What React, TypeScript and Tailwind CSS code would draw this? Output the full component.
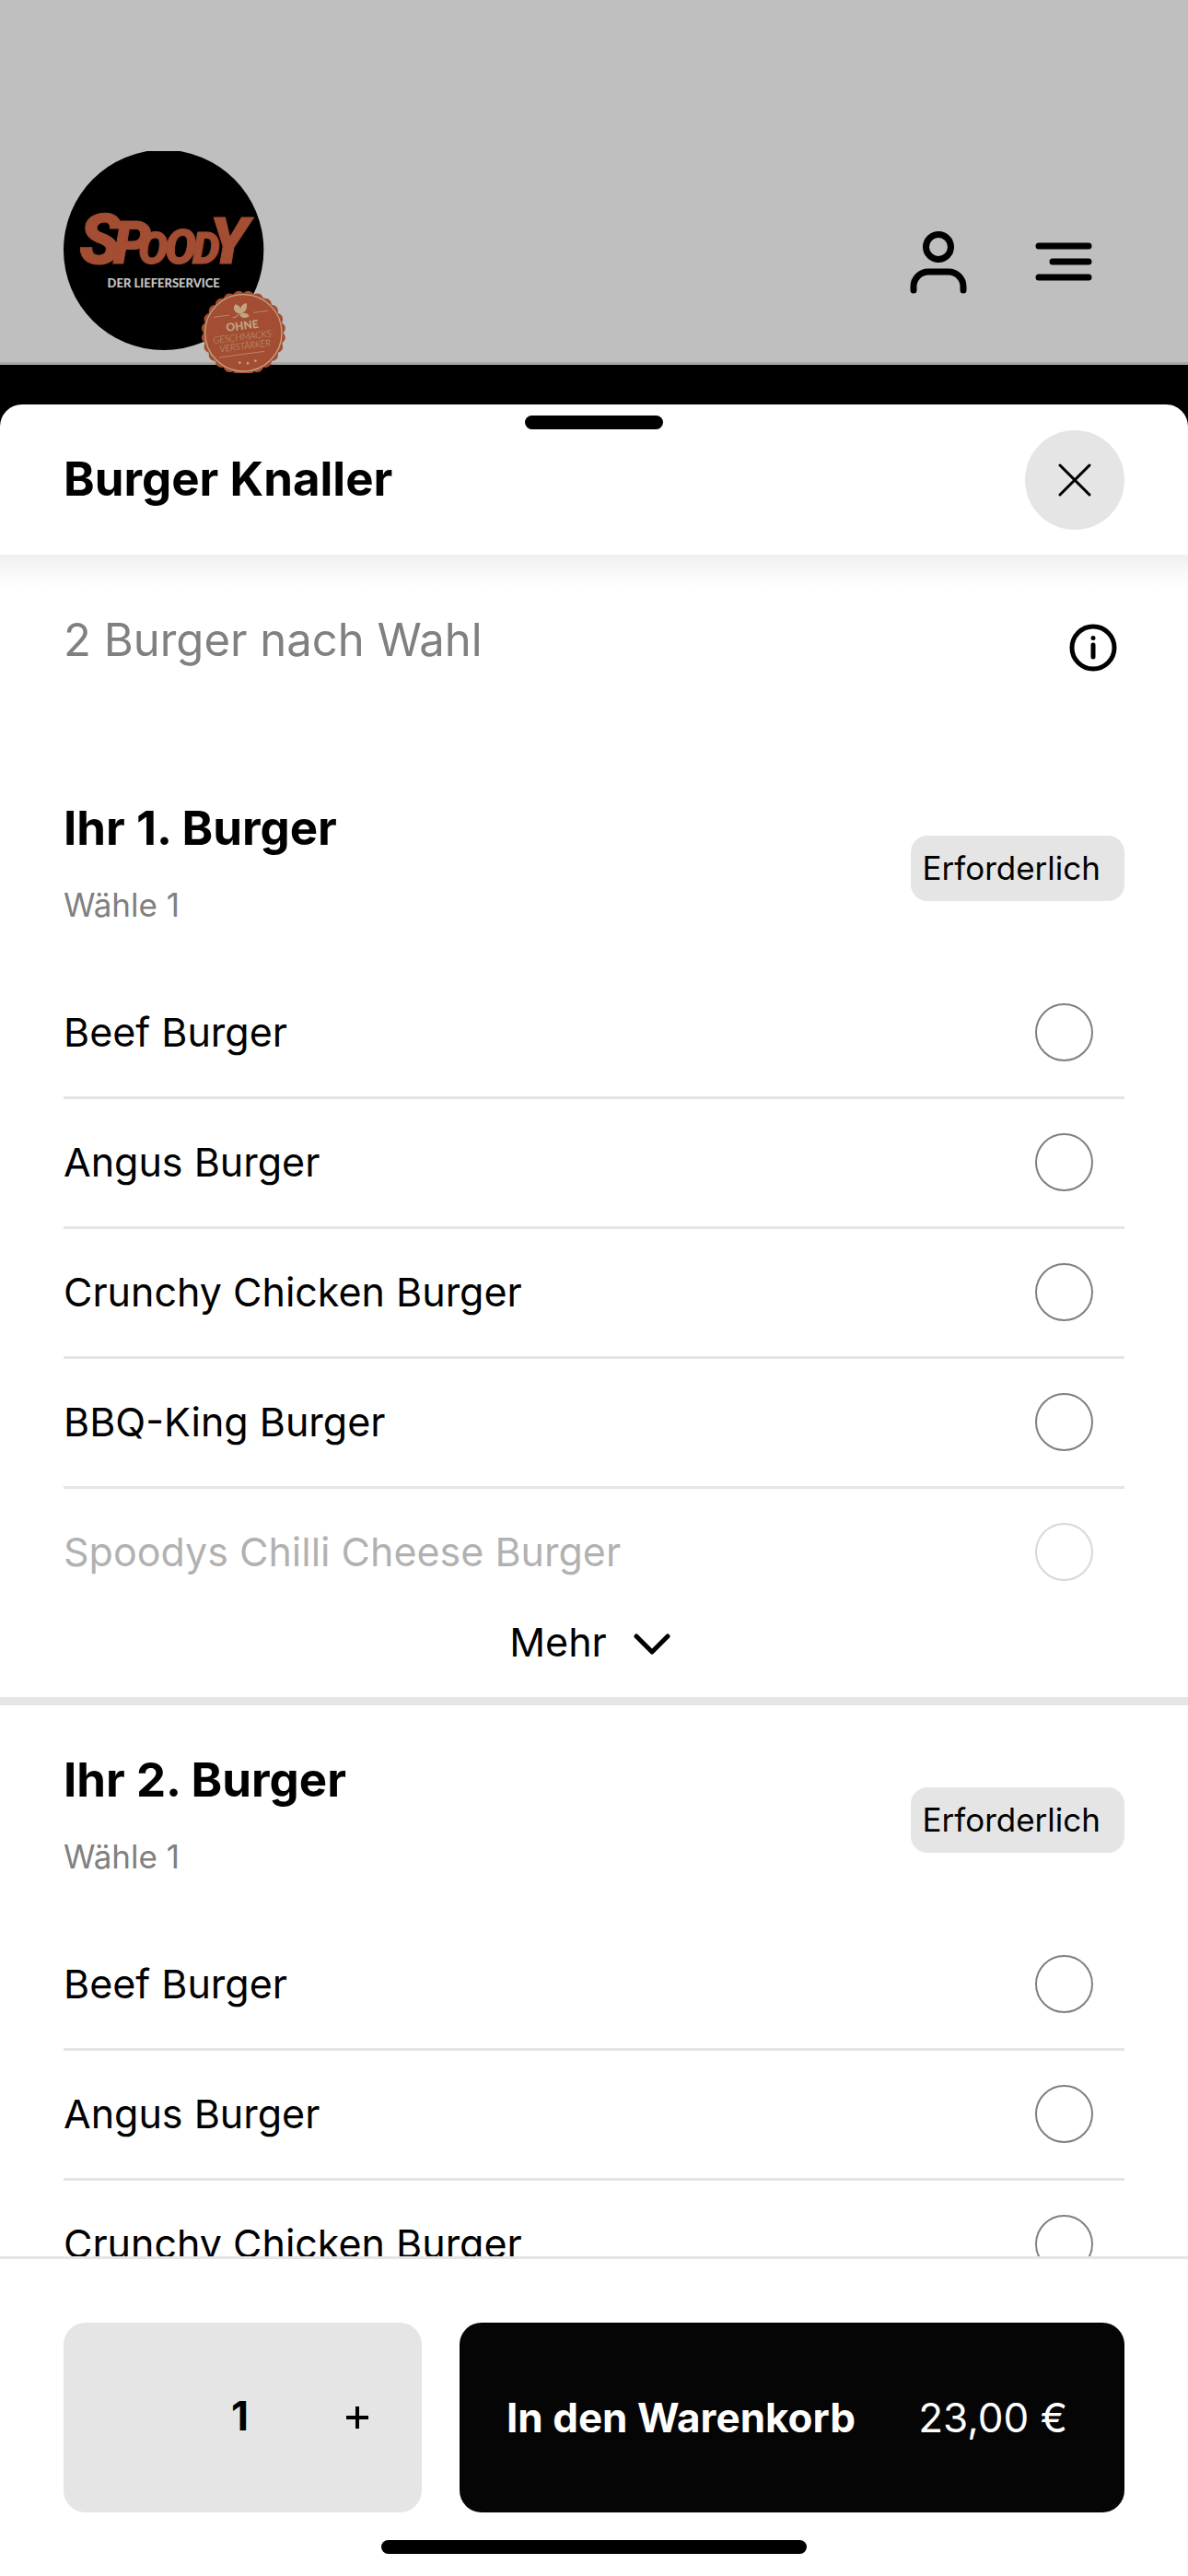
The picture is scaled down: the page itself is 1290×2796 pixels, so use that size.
import { useState } from "react";

const BURGERS = ["Beef Burger", "Angus Burger", "Crunchy Chicken Burger", "BBQ-King Burger", "Spoodys Chilli Cheese Burger"];

const SEAL_POINTS = Array.from({ length: 24 }, (_, i) => {
  const a = (i / 24) * Math.PI * 2;
  const b = ((i + 0.5) / 24) * Math.PI * 2;
  const c = ((i + 1) / 24) * Math.PI * 2;
  const p = (angle: number, r: number) =>
    `${(673 + r * Math.cos(angle)).toFixed(1)} ${(664 + r * Math.sin(angle)).toFixed(1)}`;
  return `${i === 0 ? `M${p(a, 130)}` : ""}Q${p(b, 146)} ${p(c, 130)}`;
}).join("");

function Logo() {
  return (
    <svg viewBox="87 72 723 723" className="block size-[241px]" role="img" aria-label="Spoody – Der Lieferservice">
      <circle cx="413" cy="394" r="326" fill="#000" />
      <text
        y="438"
        fill="#a34d33"
        stroke="#a34d33"
        strokeWidth="3"
        strokeLinejoin="round"
        fontFamily="Roboto, sans-serif"
        fontWeight="900"
        fontStyle="italic"
      >
        <tspan x="138" fontSize="225">S</tspan>
        <tspan x="248" fontSize="196">P</tspan>
        <tspan x="330" fontSize="144">O</tspan>
        <tspan x="416" fontSize="154">O</tspan>
        <tspan x="506" fontSize="142">D</tspan>
        <tspan x="561" fontSize="212">Y</tspan>
      </text>
      <text x="413" y="515" textAnchor="middle" fill="#c4c4c4" fontFamily="Lato, sans-serif" fontWeight="900" fontSize="39">
        DER LIEFERSERVICE
      </text>
      <path d={SEAL_POINTS + "Z"} fill="#a34d33" />
      <circle cx="673" cy="664" r="125" fill="none" stroke="#c0a583" strokeWidth="4" />
      <g fill="#c0a583">
        <path d="M662 601C640 600 638 580 647 571C664 576 668 588 662 601Z" />
        <path d="M663 602C660 582 668 569 683 567C687 584 680 597 663 602Z" />
        <path d="M660 605C670 596 686 598 692 609C681 618 666 616 660 605Z" />
        <path d="M638 615C648 613 657 606 664 596" fill="none" stroke="#c0a583" strokeWidth="3" />
        <circle cx="661" cy="761" r="4" />
        <circle cx="687" cy="763" r="4" />
        <circle cx="712" cy="755" r="4" />
      </g>
      <path d="M576 613L627 606M705 598L753 592M594 744L742 724" stroke="#c0a583" strokeWidth="2" />
      <g fill="#c0a583" textAnchor="middle" transform="rotate(-7 673 664)" fontFamily="Lato, sans-serif">
        <text x="672" y="653" fontWeight="900" fontSize="36">OHNE</text>
        <text x="673" y="687" fontWeight="300" fontStyle="italic" fontSize="31">GESCHMACKS-</text>
        <text x="673" y="717" fontWeight="300" fontStyle="italic" fontSize="30">VERSTÄRKER</text>
      </g>
    </svg>
  );
}

function Header() {
  return (
    <header className="relative z-10 flex items-start justify-between border-b-[3px] border-[#a8a8a8] bg-[#bfbfbf] px-[69px] pt-[164px]">
      <a href="#" className="-mb-3">
        <Logo />
      </a>
      <div className="flex items-center gap-16 pt-20 pr-7">
        <button type="button" aria-label="Konto">
          <svg viewBox="0 0 80 80" className="size-20" fill="none" stroke="#000" strokeWidth="7" strokeLinecap="round">
            <circle cx="42" cy="24" r="13.5" />
            <path d="M15 71V67A16 16 0 0 1 31 51H53A16 16 0 0 1 69 67V71" />
          </svg>
        </button>
        <button type="button" aria-label="Menü">
          <svg viewBox="0 0 72 72" className="size-18" fill="none" stroke="#000" strokeWidth="7" strokeLinecap="round">
            <path d="M7 19H61M22 36H61M7 53H61" />
          </svg>
        </button>
      </div>
    </header>
  );
}

function OptionRow({ group, name, faded }: { group: string; name: string; faded?: boolean }) {
  return (
    <label
      className={
        faded
          ? "flex h-[136px] items-center justify-between pr-[34px] opacity-30"
          : "flex h-[141px] items-center justify-between border-b-[3px] border-[#e5e5e5] pr-[34px] pb-0.5"
      }
    >
      <span>{name}</span>
      <input
        type="radio"
        name={group}
        value={name}
        className="size-[63px] appearance-none rounded-full border-2 border-[#808080] bg-white checked:border-[18px] checked:border-black"
      />
    </label>
  );
}

function OptionGroup({ id, title }: { id: string; title: string }) {
  return (
    <section className="border-b-[9px] border-[#e5e5e5] px-[69px] pt-[51px]" aria-labelledby={id}>
      <div className="mb-9 flex items-center justify-between">
        <div className="pb-3">
          <h2 id={id} className="text-[51px] leading-[60px] font-bold">
            {title}
          </h2>
          <p className="mt-[31px] text-[35px] leading-[44px] text-[#808080]">Wähle 1</p>
        </div>
        <span className="rounded-[18px] bg-[#e5e5e5] py-[13px] pr-[26px] pl-[13px] text-[35px] leading-[45px]">Erforderlich</span>
      </div>
      {BURGERS.map((name, i) => (
        <OptionRow key={name} group={id} name={name} faded={i === BURGERS.length - 1} />
      ))}
      <button type="button" className="mx-auto flex items-center gap-7 pr-2 pb-[30px]">
        Mehr
        <svg viewBox="0 0 42 42" className="size-[42px]" fill="none" stroke="#000" strokeWidth="5" strokeLinecap="round" strokeLinejoin="round">
          <path d="M4 15L21 32L38 15" />
        </svg>
      </button>
    </section>
  );
}

export default function App() {
  const [count, setCount] = useState(1);

  return (
    <div className="flex h-screen flex-col bg-black font-['Inter',sans-serif] text-[43px] leading-[60px] text-black">
      <Header />
      <main className="relative mt-[43px] flex min-h-0 flex-1 flex-col overflow-hidden rounded-t-3xl bg-white">
        <div className="absolute top-3 left-1/2 h-[15px] w-[150px] -translate-x-1/2 rounded-full bg-black" />
        <div className="flex items-center justify-between px-[69px] pt-7 pb-[27px]">
          <h1 className="pb-0.5 text-[51px] leading-[60px] font-bold">Burger Knaller</h1>
          <button type="button" aria-label="Schließen" className="flex size-[108px] items-center justify-center rounded-full bg-[#e5e5e5]">
            <svg viewBox="0 0 36 36" className="size-9" stroke="#000" strokeWidth="3" strokeLinecap="round">
              <path d="M2 2L34 34M34 2L2 34" />
            </svg>
          </button>
        </div>
        <div className="min-h-0 flex-1 overflow-y-auto bg-linear-to-b from-[#f0f0f0] to-white to-[36px] [scrollbar-width:none]">
          <div className="flex items-center justify-between px-[69px] pt-[63px] pb-[77px]">
            <p className="pb-4 text-[49px] leading-[60px] text-[#808080]">2 Burger nach Wahl</p>
            <button type="button" aria-label="Produktinformationen" className="mr-2">
              <svg viewBox="0 0 52 52" className="size-[52px]" fill="none" stroke="#000" strokeWidth="5" strokeLinecap="round">
                <circle cx="26" cy="26" r="23" />
                <path d="M26 23V36M26 15.4V15.6" />
              </svg>
            </button>
          </div>
          <OptionGroup id="burger-1" title="Ihr 1. Burger" />
          <OptionGroup id="burger-2" title="Ihr 2. Burger" />
        </div>
        <footer className="border-t-[3px] border-[#e5e5e5] bg-white px-[69px] pt-[69px] pb-6">
          <div className="flex gap-[41px] text-[44px]">
            <div className="grid h-[206px] w-[389px] grid-cols-3 items-center rounded-3xl bg-[#e5e5e5] pr-1.5">
              <button type="button" aria-label="Weniger" className="h-full" onClick={() => setCount(Math.max(1, count - 1))} />
              <output className="pb-1 text-center font-bold">{count}</output>
              <button type="button" aria-label="Mehr" className="flex h-full items-center justify-center" onClick={() => setCount(count + 1)}>
                <svg viewBox="0 0 24 24" className="size-6" stroke="#000" strokeWidth="4">
                  <path d="M12 0V24M0 12H24" />
                </svg>
              </button>
            </div>
            <button type="button" className="flex flex-1 items-center justify-between rounded-3xl bg-[#050505] pr-[62px] pl-[51px] text-white">
              <span className="font-bold">In den Warenkorb</span>
              <span>23,00 €</span>
            </button>
          </div>
          <div className="mx-auto mt-[30px] h-[15px] w-[462px] rounded-full bg-black" />
        </footer>
      </main>
    </div>
  );
}
